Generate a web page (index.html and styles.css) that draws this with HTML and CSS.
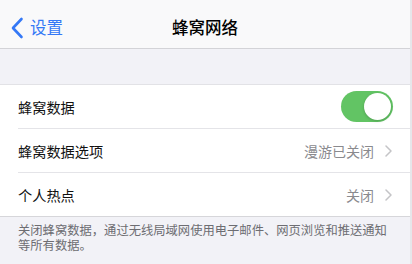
FILE: index.html
```html
<!DOCTYPE html>
<html lang="zh">
<head>
<meta charset="utf-8">
<link rel="stylesheet" href="styles.css">
</head>
<body>
<div class="screen">
  <header class="nav">
    <div class="back">
      <svg class="back-icon" width="14" height="22" viewBox="0 0 14 22"><path d="M11.5 2 L3 11 L11.5 20" fill="none" stroke="#3478f6" stroke-width="2.6" stroke-linecap="round" stroke-linejoin="round"/></svg>
      <span class="back-text">设置</span>
    </div>
    <div class="title">蜂窝网络</div>
  </header>
  <div class="spacer"></div>
  <div class="group">
    <div class="row">
      <span class="label">蜂窝数据</span>
      <span class="toggle"><span class="knob"></span></span>
    </div>
    <div class="row">
      <span class="label">蜂窝数据选项</span>
      <span class="detail">漫游已关闭<svg class="chev" width="7" height="12" viewBox="0 0 7 12"><path d="M1 1 L6 6 L1 11" fill="none" stroke="#c4c4c7" stroke-width="1.5" stroke-linecap="round" stroke-linejoin="round"/></svg></span>
    </div>
    <div class="row last">
      <span class="label">个人热点</span>
      <span class="detail">关闭<svg class="chev" width="7" height="12" viewBox="0 0 7 12"><path d="M1 1 L6 6 L1 11" fill="none" stroke="#c4c4c7" stroke-width="1.5" stroke-linecap="round" stroke-linejoin="round"/></svg></span>
    </div>
  </div>
  <p class="footer">关闭蜂窝数据，通过无线局域网使用电子邮件、网页浏览和推送通知等所有数据。</p>
</div>
</body>
</html>
```
FILE: styles.css
```css
* { box-sizing: border-box; }
html, body { margin: 0; padding: 0; }
body {
  width: 412px;
  height: 264px;
  overflow: hidden;
  background: #f2f2f7;
  font-family: "Noto Sans CJK SC", "Noto Sans", sans-serif;
  color: #111;
}
.screen { width: 412px; height: 264px; border-right: 2px solid #e6e6ea; }
.nav {
  height: 49px;
  background: #f9f9fa;
  border-bottom: 1px solid #d3d3d7;
  position: relative;
  display: flex;
  align-items: center;
  justify-content: center;
}
.back {
  position: absolute;
  left: 10px;
  top: 0;
  height: 48px;
  display: flex;
  align-items: center;
  gap: 6px;
  color: #3478f6;
  padding-top: 6px;
}
.back-icon { display: block; margin-top: 1px; }
.back-text { font-size: 16.5px; line-height: 20px; }
.title { font-size: 16.5px; font-weight: 500; line-height: 20px; margin-top: 6px; color: #000; }
.spacer { height: 35px; }
.group {
  background: #fff;
  border-top: 1px solid #e2e2e6;
  border-bottom: 1px solid #d6d6da;
  padding-left: 18px;
}
.row {
  height: 44px;
  display: flex;
  align-items: center;
  justify-content: space-between;
  padding-right: 17px;
  border-bottom: 1px solid #e4e4e8;
}
.row.last { border-bottom: none; height: 43px; }
.label { font-size: 14.2px; color: #111; }
.detail { font-size: 14px; color: #8a8a8e; display: flex; align-items: center; }
.chev { display: block; margin-left: 11px; margin-right: 1px; }
.toggle {
  width: 52px;
  height: 31px;
  border-radius: 16px;
  background: #62c464;
  display: flex;
  align-items: center;
  justify-content: flex-end;
  padding-right: 2px;
}
.knob {
  width: 27px;
  height: 27px;
  border-radius: 50%;
  background: #fff;
  box-shadow: 0 1px 3px rgba(0,0,0,0.2);
}
.footer {
  margin: 0;
  padding: 6px 18px 0 18px;
  font-size: 12.3px;
  line-height: 14.5px;
  color: #6d6d72;
}
```
